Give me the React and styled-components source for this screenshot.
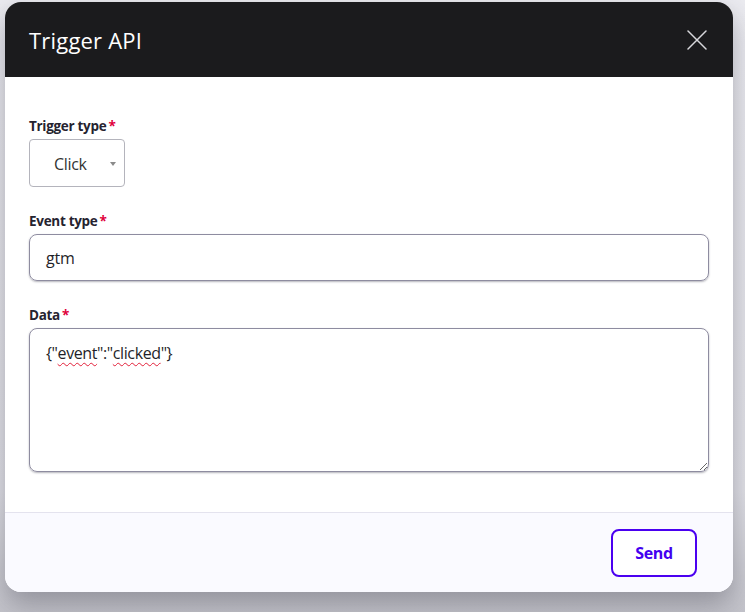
import React from "react";
import styled, { createGlobalStyle } from "styled-components";

const GlobalStyle = createGlobalStyle`
  html, body {
    margin: 0;
    padding: 0;
    height: 100%;
  }
  body {
    background: linear-gradient(180deg, #ececf1 0%, #e3e3e9 80%, #c4c4cb 100%);
    font-family: "Open Sans", "Noto Sans", sans-serif;
    overflow: hidden;
  }
`;

const Backdrop = styled.div`
  padding: 2px 12px 20px 5px;
`;

const Modal = styled.div`
  width: 728px;
  height: 590px;
  border-radius: 16px;
  overflow: hidden;
  display: flex;
  flex-direction: column;
  background: #fff;
  box-shadow: 0 12px 28px rgba(40, 40, 55, 0.35);
`;

const Header = styled.div`
  height: 75px;
  flex-shrink: 0;
  background: #1b1b1d;
  display: flex;
  align-items: center;
  justify-content: space-between;
  padding: 0 24px;
  box-sizing: border-box;
`;

const Title = styled.h2`
  margin: 0;
  font-size: 22px;
  font-weight: 400;
  color: #fff;
  letter-spacing: 0.2px;
`;

const CloseBtn = styled.button`
  background: none;
  border: none;
  padding: 0;
  width: 24px;
  height: 24px;
  display: flex;
  align-items: center;
  justify-content: center;
  cursor: pointer;
`;

const Body = styled.div`
  flex: 1;
  padding: 41px 24px 0 24px;
  display: flex;
  flex-direction: column;
`;

const Field = styled.div`
  display: flex;
  flex-direction: column;
  margin-bottom: ${(p) => p.mb || 0}px;
`;

const Label = styled.label`
  font-size: 13.5px;
  font-weight: 700;
  color: #25232f;
  margin-bottom: 5px;
  letter-spacing: -0.3px;
  line-height: 16px;
`;

const Star = styled.span`
  color: #e0003c;
  margin-left: 2px;
`;

const SelectBox = styled.div`
  width: 96px;
  height: 48px;
  box-sizing: border-box;
  border: 1px solid #b4b4bc;
  border-radius: 4px;
  display: flex;
  align-items: center;
  padding: 2px 8px 0 24px;
  font-size: 16px;
  color: #333;
  letter-spacing: -0.3px;
  justify-content: space-between;
`;

const Caret = styled.span`
  width: 0;
  height: 0;
  border-left: 3.5px solid transparent;
  border-right: 3.5px solid transparent;
  border-top: 4px solid #8a8a8a;
`;

const TextInput = styled.div`
  height: 47px;
  box-sizing: border-box;
  border: 1px solid #8e8ca0;
  border-radius: 8px;
  box-shadow: 0 1px 2px rgba(40, 40, 60, 0.35);
  display: flex;
  align-items: center;
  padding: 0 16px;
  font-size: 16px;
  color: #1f1f29;
  letter-spacing: -0.2px;
`;

const TextArea = styled.div`
  height: 144px;
  box-sizing: border-box;
  border: 1px solid #8e8ca0;
  border-radius: 8px;
  box-shadow: 0 1px 2px rgba(40, 40, 60, 0.35);
  padding: 13px 16px;
  font-size: 16px;
  color: #1f1f29;
  letter-spacing: -0.4px;
  overflow: auto;
  resize: vertical;
`;

const Misspelled = styled.span`
  text-decoration: underline wavy #e2203a;
  text-decoration-thickness: 1px;
  text-underline-offset: 3px;
`;

const Footer = styled.div`
  height: 80px;
  flex-shrink: 0;
  box-sizing: border-box;
  border-top: 1px solid #e4e3ee;
  background: #fafaff;
  display: flex;
  align-items: center;
  justify-content: flex-end;
  padding: 0 36px 0 24px;
`;

const SendBtn = styled.button`
  width: 86px;
  height: 48px;
  border: 2px solid #4a00f0;
  border-radius: 8px;
  background: #fff;
  color: #4300f0;
  font-family: inherit;
  font-size: 16px;
  font-weight: 700;
  letter-spacing: -0.3px;
  cursor: pointer;
`;

function App() {
  return (
    <>
      <GlobalStyle />
      <Backdrop>
        <Modal>
          <Header>
            <Title>Trigger API</Title>
            <CloseBtn aria-label="Close">
              <svg width="20" height="20" viewBox="0 0 20 20">
                <path d="M1 1 L19 19 M19 1 L1 19" stroke="#d8d8dc" strokeWidth="1.5" strokeLinecap="round" />
              </svg>
            </CloseBtn>
          </Header>
          <Body>
            <Field mb={26}>
              <Label>Trigger type<Star>*</Star></Label>
              <SelectBox>
                <span>Click</span>
                <Caret />
              </SelectBox>
            </Field>
            <Field mb={26}>
              <Label>Event type<Star>*</Star></Label>
              <TextInput>gtm</TextInput>
            </Field>
            <Field>
              <Label>Data<Star>*</Star></Label>
              <TextArea role="textbox">
                {'{"'}<Misspelled>event</Misspelled>{'":"'}<Misspelled>clicked</Misspelled>{'"}'}
              </TextArea>
            </Field>
          </Body>
          <Footer>
            <SendBtn>Send</SendBtn>
          </Footer>
        </Modal>
      </Backdrop>
    </>
  );
}

export default App;
